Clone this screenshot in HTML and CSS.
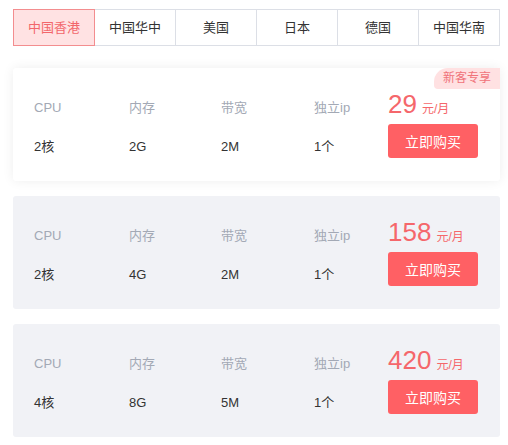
FILE: index.html
```html
<!DOCTYPE html>
<html lang="zh-CN">
<head>
    <meta charset="UTF-8">
    <meta name="viewport" content="width=device-width, initial-scale=1.0">
    <title>云服务器套餐</title>
    <link rel="stylesheet" href="styles.css">
</head>
<body>

    <div class="page">
        <ul class="region-tabs">
            <li class="tab active">中国香港</li>
            <li class="tab">中国华中</li>
            <li class="tab">美国</li>
            <li class="tab">日本</li>
            <li class="tab">德国</li>
            <li class="tab">中国华南</li>
        </ul>

        <div class="plan-list">
            <div class="plan featured">
                <span class="badge">新客专享</span>
                <div class="spec spec-cpu"><span class="spec-label">CPU</span><span class="spec-value">2核</span></div>
                <div class="spec spec-mem"><span class="spec-label">内存</span><span class="spec-value">2G</span></div>
                <div class="spec"><span class="spec-label">带宽</span><span class="spec-value">2M</span></div>
                <div class="spec spec-ip"><span class="spec-label">独立ip</span><span class="spec-value">1个</span></div>
                <div class="buy">
                    <div class="price"><span class="amount">29</span><span class="unit">元/月</span></div>
                    <button class="buy-btn">立即购买</button>
                </div>
            </div>

            <div class="plan">
                <div class="spec spec-cpu"><span class="spec-label">CPU</span><span class="spec-value">2核</span></div>
                <div class="spec spec-mem"><span class="spec-label">内存</span><span class="spec-value">4G</span></div>
                <div class="spec"><span class="spec-label">带宽</span><span class="spec-value">2M</span></div>
                <div class="spec spec-ip"><span class="spec-label">独立ip</span><span class="spec-value">1个</span></div>
                <div class="buy">
                    <div class="price"><span class="amount">158</span><span class="unit">元/月</span></div>
                    <button class="buy-btn">立即购买</button>
                </div>
            </div>

            <div class="plan">
                <div class="spec spec-cpu"><span class="spec-label">CPU</span><span class="spec-value">4核</span></div>
                <div class="spec spec-mem"><span class="spec-label">内存</span><span class="spec-value">8G</span></div>
                <div class="spec"><span class="spec-label">带宽</span><span class="spec-value">5M</span></div>
                <div class="spec spec-ip"><span class="spec-label">独立ip</span><span class="spec-value">1个</span></div>
                <div class="buy">
                    <div class="price"><span class="amount">420</span><span class="unit">元/月</span></div>
                    <button class="buy-btn">立即购买</button>
                </div>
            </div>
        </div>
    </div>

</body>
</html>
```

FILE: styles.css
```css
:root {
    --red: #ff6064;
    --price-red: #f5676b;
    --label-color: #a3a9b5;
    --text-color: #333333;
    --line-color: #dcdfe6;
    --card-grey: #f1f2f6;
}

* { box-sizing: border-box; }

body {
    margin: 0;
    background: #ffffff;
    font-family: "Liberation Sans", "Noto Sans CJK SC", sans-serif;
    color: var(--text-color);
}

.page {
    width: 487px;
    margin: 9px 0 0 13px;
}

/* --- 地区切换 --- */
.region-tabs {
    display: flex;
    margin: 0;
    padding: 0;
    list-style: none;
}
.tab {
    flex: 1;
    height: 37px;
    line-height: 35px;
    text-align: center;
    font-size: 13px;
    border: 1px solid var(--line-color);
    border-left-width: 0;
    color: #333;
}
.tab:first-child { border-left-width: 1px; }
.tab.active {
    background: #ffe2e3;
    border: 1px solid #f38d8f;
    color: #f2666b;
}

/* --- 套餐列表 --- */
.plan-list {
    display: flex;
    flex-direction: column;
    gap: 15px;
    margin-top: 22px;
}
.plan {
    position: relative;
    display: flex;
    align-items: center;
    height: 113px;
    padding: 6px 0 0 21px;
    background: var(--card-grey);
    border-radius: 3px;
}
.plan.featured {
    background: #ffffff;
    box-shadow: 0 0 12px rgba(0, 0, 0, 0.07);
}
.badge {
    position: absolute;
    top: 0;
    right: 0;
    width: 66px;
    height: 21px;
    line-height: 21px;
    text-align: center;
    font-size: 12px;
    color: #f0737a;
    background: #ffe1e2;
    border-radius: 14px 0 0 4px;
}

.spec {
    display: flex;
    flex-direction: column;
    gap: 19px;
    width: 93px;
    font-size: 13px;
    line-height: 20px;
}
.spec-cpu { width: 95px; }
.spec-mem { width: 92px; }
.spec-ip { width: 74px; }
.spec-label { color: var(--label-color); }
.spec-value { color: var(--text-color); }

.buy {
    display: flex;
    flex-direction: column;
    margin-top: -10px;
}
.price {
    height: 32px;
    line-height: 32px;
    color: var(--price-red);
    white-space: nowrap;
}
.amount {
    font-size: 26px;
}
.unit {
    margin-left: 5px;
    font-size: 12px;
}
.buy-btn {
    width: 90px;
    height: 34px;
    margin-top: 4px;
    border: 0;
    border-radius: 3px;
    background: var(--red);
    color: #ffffff;
    font-family: inherit;
    font-size: 14px;
    cursor: pointer;
}
```
